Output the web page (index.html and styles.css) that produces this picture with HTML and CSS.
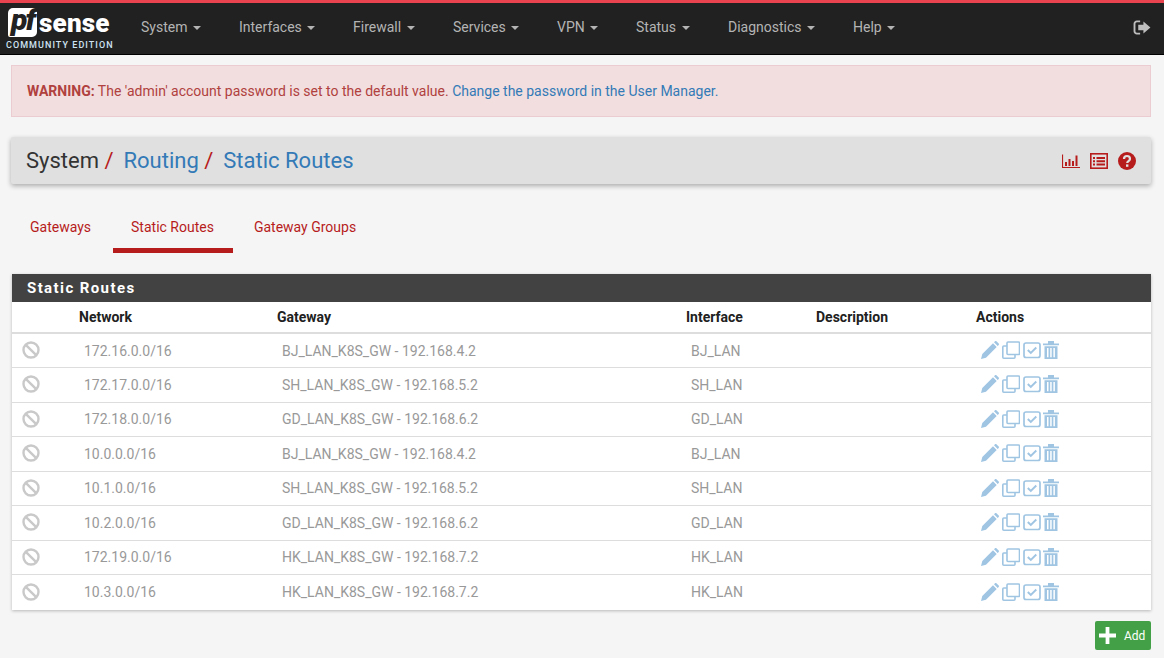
FILE: index.html
```html
<!DOCTYPE html>
<html lang="en">
<head>
    <meta charset="UTF-8">
    <title>pfSense - Static Routes</title>
    <link rel="stylesheet" href="styles.css">
</head>
<body>
    <nav class="navbar">
        <div class="brand">
            <div class="logo-top"><span class="logo-pf">pf</span><span class="logo-sense">sense</span></div>
            <div class="logo-sub">COMMUNITY EDITION</div>
        </div>
        <ul class="menu">
            <li class="m-system">System <i class="caret"></i></li>
            <li class="m-interfaces">Interfaces <i class="caret"></i></li>
            <li class="m-firewall">Firewall <i class="caret"></i></li>
            <li class="m-services">Services <i class="caret"></i></li>
            <li class="m-vpn">VPN <i class="caret"></i></li>
            <li class="m-status">Status <i class="caret"></i></li>
            <li class="m-diag">Diagnostics <i class="caret"></i></li>
            <li class="m-help">Help <i class="caret"></i></li>
        </ul>
        <svg class="logout" viewBox="0 0 18 16"><path d="M7 1.500H3.500A2.500 2.500 0 0 0 1 4v8a2.500 2.500 0 0 0 2.500 2.500H7" fill="none" stroke="currentColor" stroke-width="2"/><path d="M10.500 1.500 18 8l-7.500 6.500V11H5V5h5.500z" fill="currentColor"/></svg>
    </nav>

    <div class="alert"><b>WARNING:</b> The 'admin' account password is set to the default value. <a href="#">Change the password in the User Manager.</a></div>

    <header class="crumbs">
        <h1>System <em>/</em> <a href="#">Routing</a> <em>/</em> <a href="#">Static Routes</a></h1>
        <div class="crumb-icons">
            <svg viewBox="0 0 18 16"><path d="M0 1.500h1.100v12.400H18V15H0z M3 9h2v4H3z M6.500 6h2v7h-2z M10 8h2v5h-2z M13.500 2.500h2V13h-2z" fill="currentColor"/></svg>
            <svg viewBox="0 0 18 16"><rect x="0.800" y="0.800" width="16.400" height="14.400" fill="none" stroke="currentColor" stroke-width="1.600"/><path d="M3 4h2v2H3zM6.500 4H15v2H6.500zM3 7.200h2v2H3zM6.500 7.200H15v2H6.500zM3 10.400h2v2H3zM6.500 10.400H15v2H6.500z" fill="currentColor"/></svg>
            <svg viewBox="0 0 18 18"><circle cx="9" cy="9" r="9" fill="currentColor"/><path d="M6 7a3 3 0 0 1 6 0c0 2-2.800 2.300-2.800 4" fill="none" stroke="#e0e0e0" stroke-width="2.200"/><rect x="8" y="12.400" width="2.400" height="2.400" fill="#e0e0e0"/></svg>
        </div>
    </header>

    <ul class="tabs">
        <li>Gateways</li>
        <li class="active">Static Routes</li>
        <li>Gateway Groups</li>
    </ul>

    <section class="panel">
        <h2>Static Routes</h2>
        <table>
            <thead>
                <tr>
                    <th class="c-state"></th>
                    <th class="c-net">Network</th>
                    <th class="c-gw">Gateway</th>
                    <th class="c-if">Interface</th>
                    <th class="c-desc">Description</th>
                    <th>Actions</th>
                </tr>
            </thead>
            <tbody id="routeList"></tbody>
        </table>
    </section>

    <div class="footer-actions">
        <button class="btn-add"><svg viewBox="0 0 18 18"><path d="M7 0h4v7h7v4h-7v7H7v-7H0V7h7z" fill="currentColor"/></svg>Add</button>
    </div>

    <script src="routes.js"></script>
</body>
</html>
```

FILE: styles.css
```css
* {
    box-sizing: border-box;
}
body {
    margin: 0;
    background-color: #f5f5f5;
    font-family: Roboto, "Liberation Sans", sans-serif;
    font-size: 14px;
    color: #212121;
    height: 658px;
    overflow: hidden;
}
a {
    color: #337ab7;
    text-decoration: none;
}

/* top bar */
.navbar {
    display: flex;
    align-items: center;
    height: 55px;
    background-color: #212121;
    border-top: 3px solid #e8434f;
    border-bottom: 1px solid #000;
}
.brand {
    width: 141px;
    padding-left: 6px;
    flex: none;
}
.logo-top {
    display: flex;
    align-items: center;
    height: 30px;
    margin-left: 2px;
}
.logo-pf {
    width: 29px;
    height: 29px;
    background-color: #fff;
    color: #212121;
    border-radius: 5px 2px 5px 2px;
    font-size: 30px;
    line-height: 24px;
    font-weight: 900;
    font-style: italic;
    letter-spacing: -2px;
    text-align: center;
}
.logo-sense {
    color: #fff;
    font-size: 26px;
    line-height: 28px;
    font-weight: 900;
    margin-left: 2px;
    letter-spacing: 0.2px;
}
.logo-sub {
    color: #cfe3f3;
    font-size: 9px;
    font-weight: 500;
    letter-spacing: 1.05px;
    white-space: nowrap;
    margin-top: 2px;
}
.menu {
    display: flex;
    list-style: none;
    margin: 0 0 3px;
    padding: 0;
    color: #b4b4b4;
}
.menu li {
    white-space: nowrap;
}
.m-system { width: 98px; }
.m-interfaces { width: 114px; }
.m-firewall { width: 100px; }
.m-services { width: 104px; }
.m-vpn { width: 79px; }
.m-status { width: 92px; }
.m-diag { width: 125px; }
.caret {
    display: inline-block;
    width: 0;
    height: 0;
    margin-left: 2px;
    vertical-align: middle;
    border-top: 4px solid #b4b4b4;
    border-left: 4px solid transparent;
    border-right: 4px solid transparent;
}
.logout {
    width: 18px;
    height: 15px;
    margin: 0 13px 3px auto;
    color: #bdbdbd;
}

/* warning */
.alert {
    margin: 10px 13px 0 11px;
    height: 52px;
    padding: 15px;
    line-height: 20px;
    background-color: #f2dede;
    border: 1px solid #ebccd1;
    color: #b0413e;
}

/* breadcrumb bar */
.crumbs {
    display: flex;
    align-items: center;
    justify-content: space-between;
    margin: 20px 13px 0 11px;
    height: 47px;
    padding: 0 15px;
    background-color: #e0e0e0;
    border-radius: 2px;
    box-shadow: 0 2px 5px rgba(0, 0, 0, 0.3);
}
.crumbs h1 {
    margin: 0;
    font-size: 22px;
    font-weight: 400;
    color: #333;
}
.crumbs em {
    color: #b71c1c;
    font-style: normal;
    margin-right: 4.500px;
}
.crumb-icons {
    display: flex;
    align-items: center;
    gap: 10px;
    color: #b71c1c;
}
.crumb-icons svg {
    width: 18px;
    height: 16px;
}
.crumb-icons svg:last-child {
    height: 18px;
}

/* tabs */
.tabs {
    display: flex;
    list-style: none;
    margin: 19px 0 0 12px;
    padding: 0;
    height: 50px;
    color: #b71c1c;
}
.tabs li {
    padding: 15px 20px 0 18px;
    line-height: 18px;
}
.tabs li:nth-child(2) {
    padding: 15px 19px 0 18px;
    margin-left: 2px;
}
.tabs li:nth-child(3) {
    padding-left: 21px;
}
.tabs .active {
    border-bottom: 5px solid #b71c1c;
}

/* table panel */
.panel {
    margin: 21px 13px 0 12px;
    padding-bottom: 1px;
    background-color: #fff;
    box-shadow: 0 1px 3px rgba(0, 0, 0, 0.25);
}
.panel h2 {
    margin: 0;
    height: 28px;
    padding: 0 15px;
    background-color: #424242;
    color: #fff;
    font-size: 15px;
    line-height: 28px;
    font-weight: 700;
    letter-spacing: 1.4px;
}
table {
    width: 100%;
    table-layout: fixed;
    border-collapse: collapse;
}
th {
    height: 31px;
    padding: 0 0 0 5px;
    text-align: left;
    font-size: 14px;
    font-weight: 700;
    border-bottom: 2px solid #ddd;
}
td {
    height: 34.500px;
    padding: 0 0 0 10px;
    color: #999;
    border-bottom: 1px solid #ddd;
}
tr:last-child td {
    border-bottom: none;
}
.c-state { width: 62px; }
.c-net { width: 198px; }
.c-gw { width: 409px; }
.c-if { width: 130px; }
.c-desc { width: 160px; }
.ban {
    display: block;
    width: 18px;
    height: 18px;
    margin-bottom: 1px;
    color: #c9c9c9;
}
.actions {
    display: flex;
    gap: 3px;
    align-items: center;
    padding-bottom: 1px;
    color: #9fc5e3;
}
.actions svg {
    width: 18px;
    height: 18px;
    flex: none;
}
.actions .trash {
    width: 16px;
    margin-left: -1px;
}

/* bottom button */
.footer-actions {
    display: flex;
    justify-content: flex-end;
    margin: 11px 13px 0 0;
}
.btn-add {
    display: flex;
    align-items: center;
    gap: 8px;
    width: 56px;
    height: 29px;
    padding: 0 0 0 4px;
    border: none;
    border-radius: 2px;
    background-color: #43a047;
    color: #fff;
    font-family: inherit;
    font-size: 12px;
    font-weight: 400;
}
.btn-add svg {
    width: 17px;
    height: 17px;
    flex: none;
}
```

FILE: routes.js
```js
// Static routes shown in the table
const routes = [
    ['172.16.0.0/16', 'BJ_LAN_K8S_GW - 192.168.4.2', 'BJ_LAN'],
    ['172.17.0.0/16', 'SH_LAN_K8S_GW - 192.168.5.2', 'SH_LAN'],
    ['172.18.0.0/16', 'GD_LAN_K8S_GW - 192.168.6.2', 'GD_LAN'],
    ['10.0.0.0/16', 'BJ_LAN_K8S_GW - 192.168.4.2', 'BJ_LAN'],
    ['10.1.0.0/16', 'SH_LAN_K8S_GW - 192.168.5.2', 'SH_LAN'],
    ['10.2.0.0/16', 'GD_LAN_K8S_GW - 192.168.6.2', 'GD_LAN'],
    ['172.19.0.0/16', 'HK_LAN_K8S_GW - 192.168.7.2', 'HK_LAN'],
    ['10.3.0.0/16', 'HK_LAN_K8S_GW - 192.168.7.2', 'HK_LAN']
];

const ban = '<svg class="ban" viewBox="0 0 18 18"><circle cx="9" cy="9" r="7.500" fill="none" stroke="currentColor" stroke-width="2.400"/><path d="M3.800 3.800 14.200 14.200" stroke="currentColor" stroke-width="2.400"/></svg>';
const pencil = '<svg viewBox="0 0 18 18"><path d="M0 18l1.300-5L12 2.300l3.700 3.700L5 16.700zM13 1.300l1-1c.5-.4 1-.4 1.400 0l2.300 2.300c.4.4.4 1 0 1.400l-1 1z" fill="currentColor"/></svg>';
const copy = '<svg viewBox="0 0 18 18"><rect x="5" y="1" width="12.500" height="12.500" rx="1" fill="none" stroke="currentColor" stroke-width="1.600"/><path d="M5 5H1.800a1 1 0 0 0-1 1v10.200a1 1 0 0 0 1 1H12a1 1 0 0 0 1-1V13.500" fill="none" stroke="currentColor" stroke-width="1.600"/></svg>';
const check = '<svg viewBox="0 0 18 18"><rect x="1" y="2" width="16" height="14.500" rx="2" fill="none" stroke="currentColor" stroke-width="1.700"/><path d="M4.800 9l3 3 5.500-5.500" fill="none" stroke="currentColor" stroke-width="1.900"/></svg>';
const trash = '<svg class="trash" viewBox="0 0 16 18"><path d="M0 2.500h16v1.800H0zM5 0h6v2.500H5zM1.500 5.200h13V18h-13zM4 7V16.200h1.500V7zM7.200 7V16.200h1.500V7zM10.400 7V16.200h1.500V7z" fill="currentColor" fill-rule="evenodd"/></svg>';

const routeList = document.getElementById('routeList');

routes.forEach(route => {
    const row = document.createElement('tr');
    row.innerHTML = `
        <td>${ban}</td>
        <td>${route[0]}</td>
        <td>${route[1]}</td>
        <td>${route[2]}</td>
        <td></td>
        <td><div class="actions">${pencil}${copy}${check}${trash}</div></td>
    `;
    routeList.appendChild(row);
});
```
